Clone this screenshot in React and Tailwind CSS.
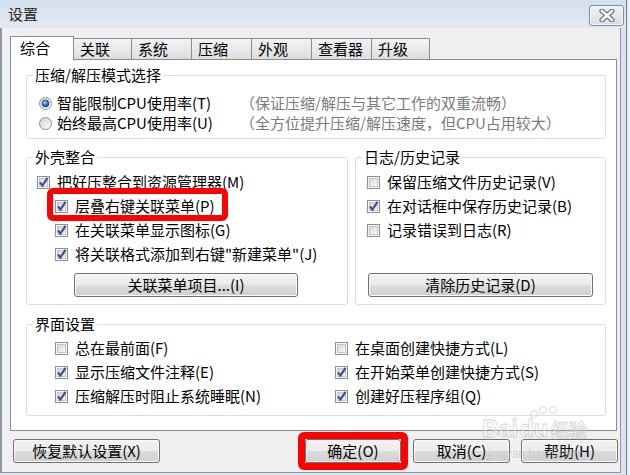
import React from "react";

// Win7 style checkbox
const Check = ({ checked }) => (
  <svg width="13" height="13" viewBox="0 0 13 13" className="shrink-0">
    <defs>
      <linearGradient id="cbfill" x1="0" y1="0" x2="1" y2="1">
        <stop offset="0" stopColor="#d3d6da" />
        <stop offset="1" stopColor="#fbfbfb" />
      </linearGradient>
    </defs>
    <rect x="0.5" y="0.5" width="12" height="12" fill="#f6f6f6" stroke="#8e8f8f" />
    <rect x="2.5" y="2.5" width="8" height="8" fill="url(#cbfill)" stroke="#c2c5c9" />
    {checked && (
      <path d="M3 6.3 L5.4 9.6 L10.6 1.8" fill="none" stroke="#3b5396" strokeWidth="2.2" />
    )}
  </svg>
);

const Radio = ({ checked }) => (
  <svg width="13" height="13" viewBox="0 0 13 13" className="shrink-0">
    <defs>
      <linearGradient id="rdfill" x1="0" y1="0" x2="1" y2="1">
        <stop offset="0" stopColor="#d0d3d7" />
        <stop offset="1" stopColor="#fdfdfd" />
      </linearGradient>
      <radialGradient id="rddot" cx="0.4" cy="0.35" r="0.7">
        <stop offset="0" stopColor="#a8e4ff" />
        <stop offset="0.5" stopColor="#2c84d4" />
        <stop offset="1" stopColor="#113f84" />
      </radialGradient>
    </defs>
    <circle cx="6.5" cy="6.5" r="6" fill="url(#rdfill)" stroke="#8c8f92" />
    {checked && <circle cx="6.5" cy="6.5" r="3.4" fill="url(#rddot)" stroke="#1b3f73" strokeWidth="0.8" />}
  </svg>
);

const CheckRow = ({ checked, children, className = "" }) => (
  <div className={`h-[24px] flex items-center gap-[7px] whitespace-nowrap ${className}`}>
    <Check checked={checked} />
    <span className="leading-[18px]">{children}</span>
  </div>
);

const Btn = ({ children, className = "" }) => (
  <button
    type="button"
    className={`h-[24px] flex items-center justify-center rounded-[3px] border border-[#707070] bg-[linear-gradient(#f2f2f2_0%,#ebebeb_50%,#dddddd_51%,#cfcfcf_100%)] shadow-[inset_0_0_0_1px_#fbfbfb] leading-[18px] whitespace-nowrap ${className}`}
  >
    {children}
  </button>
);

const GroupBox = ({ title, className = "", children }) => (
  <fieldset className={`border border-[#d5dfe5] rounded-[3px] p-0 m-0 ${className}`}>
    <legend className="ml-[6px] px-[2px] leading-[18px]">{title}</legend>
    {children}
  </fieldset>
);

const tabs = [
  { label: "关联", w: "w-[58px]" },
  { label: "系统", w: "w-[60px]" },
  { label: "压缩", w: "w-[60px]" },
  { label: "外观", w: "w-[60px]" },
  { label: "查看器", w: "w-[60px]" },
  { label: "升级", w: "w-[58px]" },
];

export default function App() {
  return (
    <div className="relative w-[630px] h-[475px] overflow-hidden bg-[#e9edf2] font-['Noto_Sans_CJK_SC',sans-serif] text-[15px] text-black">
      <div className="w-[627px] h-[475px] bg-[#dbe4ee] border-r border-[#6f7f92]">
        {/* title bar */}
        <div className="h-[28px] flex items-start justify-between pl-[8px] pr-[2px] bg-[linear-gradient(#d5e0ec,#e2e9f1)]">
          <span className="mt-[5px] leading-[18px] text-[#262626]">设置</span>
          <button
            type="button"
            className="mt-[5px] w-[35px] h-[21px] flex items-center justify-center rounded-[3px] border border-[#7d8ea3] bg-[linear-gradient(#eef2f7,#d6dfe9)] shadow-[inset_0_0_0_1px_#f7f9fb]"
          >
            <svg width="16" height="13" viewBox="0 0 16 13">
              <path d="M3 2 L13 11 M13 2 L3 11" stroke="#555d68" strokeWidth="5" strokeLinecap="round" />
              <path d="M3 2 L13 11 M13 2 L3 11" stroke="#ffffff" strokeWidth="3" strokeLinecap="round" />
            </svg>
          </button>
        </div>

        {/* body */}
        <div className="w-[621px] h-[445px] bg-[#f0f0f0] border-l-2 border-r border-b border-[#8d98a5] pl-[8px] pt-[8px]">
          {/* tab strip */}
          <div className="flex items-end h-[23px]">
            <div className="relative z-10 w-[64px] h-[24px] -mb-px bg-white border border-b-0 border-[#898c95] pl-[9px] pb-[1px] flex items-center leading-[18px]">
              综合
            </div>
            {tabs.map((t) => (
              <div
                key={t.label}
                className={`${t.w} h-[21px] border-t border-r border-[#898c95] bg-[linear-gradient(#f4f4f4,#dedede)] pl-[6px] flex items-center leading-[18px]`}
              >
                {t.label}
              </div>
            ))}
          </div>

          {/* panel */}
          <div className="w-[607px] h-[372px] bg-white border border-[#898c95] pt-[6px] pl-[15px] pr-[10px]">
            <GroupBox title="压缩/解压模式选择">
              <div className="pl-[12px] pt-[9px] pb-[5px]">
                <div className="h-[20px] flex items-center whitespace-nowrap">
                  <Radio checked />
                  <span className="ml-[5px] w-[183px] leading-[18px]">智能限制CPU使用率(T)</span>
                  <span className="leading-[18px] text-[#7a7a7a]">（保证压缩/解压与其它工作的双重流畅）</span>
                </div>
                <div className="h-[20px] flex items-center whitespace-nowrap">
                  <Radio />
                  <span className="ml-[5px] w-[183px] leading-[18px]">始终最高CPU使用率(U)</span>
                  <span className="leading-[18px] text-[#7a7a7a]">（全方位提升压缩/解压速度，但CPU占用较大）</span>
                </div>
              </div>
            </GroupBox>

            <div className="flex gap-[7px] mt-[9px]">
              <GroupBox title="外壳整合" className="w-[322px]">
                <div className="pl-[10px] pt-[4px] pb-[7px]">
                  <CheckRow checked>把好压整合到资源管理器(M)</CheckRow>
                  <CheckRow checked className="ml-[18px]">层叠右键关联菜单(P)</CheckRow>
                  <CheckRow checked className="ml-[18px]">在关联菜单显示图标(G)</CheckRow>
                  <CheckRow checked className="ml-[18px]">将关联格式添加到右键"新建菜单"(J)</CheckRow>
                  <Btn className="mt-[7px] ml-[37px] w-[224px]">关联菜单项目...(I)</Btn>
                </div>
              </GroupBox>

              <GroupBox title="日志/历史记录" className="flex-1">
                <div className="pl-[11px] pt-[4px] pb-[7px]">
                  <CheckRow>保留压缩文件历史记录(V)</CheckRow>
                  <CheckRow checked>在对话框中保存历史记录(B)</CheckRow>
                  <CheckRow>记录错误到日志(R)</CheckRow>
                  <Btn className="mt-[31px] ml-[1px] w-[225px]">清除历史记录(D)</Btn>
                </div>
              </GroupBox>
            </div>

            <GroupBox title="界面设置" className="mt-[10px]">
              <div className="grid grid-cols-[280px_1fr] pl-[28px] pt-[3px] pb-[7px]">
                <CheckRow>总在最前面(F)</CheckRow>
                <CheckRow>在桌面创建快捷方式(L)</CheckRow>
                <CheckRow checked>显示压缩文件注释(E)</CheckRow>
                <CheckRow checked>在开始菜单创建快捷方式(S)</CheckRow>
                <CheckRow checked>压缩解压时阻止系统睡眠(N)</CheckRow>
                <CheckRow checked>创建好压程序组(Q)</CheckRow>
              </div>
            </GroupBox>
          </div>

          {/* bottom buttons */}
          <div className="flex mt-[8px]">
            <Btn className="ml-[3px] w-[147px]">恢复默认设置(X)</Btn>
            <Btn className="ml-[145px] w-[96px]">确定(O)</Btn>
            <Btn className="ml-[12px] w-[97px]">取消(C)</Btn>
            <Btn className="ml-[11px] w-[97px]">帮助(H)</Btn>
          </div>
        </div>
      </div>

      {/* red annotation boxes */}
      <div className="absolute left-[47px] top-[188px] w-[181px] h-[33px] border-[6px] border-[#ff0000] rounded-[6px]" />
      <div className="absolute left-[298px] top-[432px] w-[110px] h-[38px] border-[7px] border-[#ff0000] rounded-[6px]" />

      {/* watermark */}
      <div className="absolute left-[482px] top-[404px] pointer-events-none select-none">
        <svg width="40" height="16" viewBox="0 0 40 16" className="ml-[44px]">
          <circle cx="8" cy="10" r="3.5" fill="none" stroke="#d8d8d8" />
          <circle cx="17" cy="6" r="3.5" fill="none" stroke="#d8d8d8" />
          <circle cx="27" cy="6" r="3.5" fill="none" stroke="#d8d8d8" />
        </svg>
        <div className="flex items-end -mt-[1px] font-['Liberation_Sans',sans-serif] font-bold text-[23px] leading-[20px] text-[rgba(255,255,255,0.35)] [-webkit-text-stroke:0.8px_rgba(170,170,170,0.5)]">
          <span>Bai</span>
          <span className="ml-[2px]">du</span>
          <span className="ml-[3px] font-['Noto_Sans_CJK_SC',sans-serif] text-[18px] leading-[20px]">经验</span>
        </div>
        <div className="ml-[5px] mt-[9px] font-['Liberation_Sans',sans-serif] text-[12px] leading-[12px] text-[rgba(190,190,190,0.55)]">
          jingyan.baidu.com
        </div>
      </div>
    </div>
  );
}
